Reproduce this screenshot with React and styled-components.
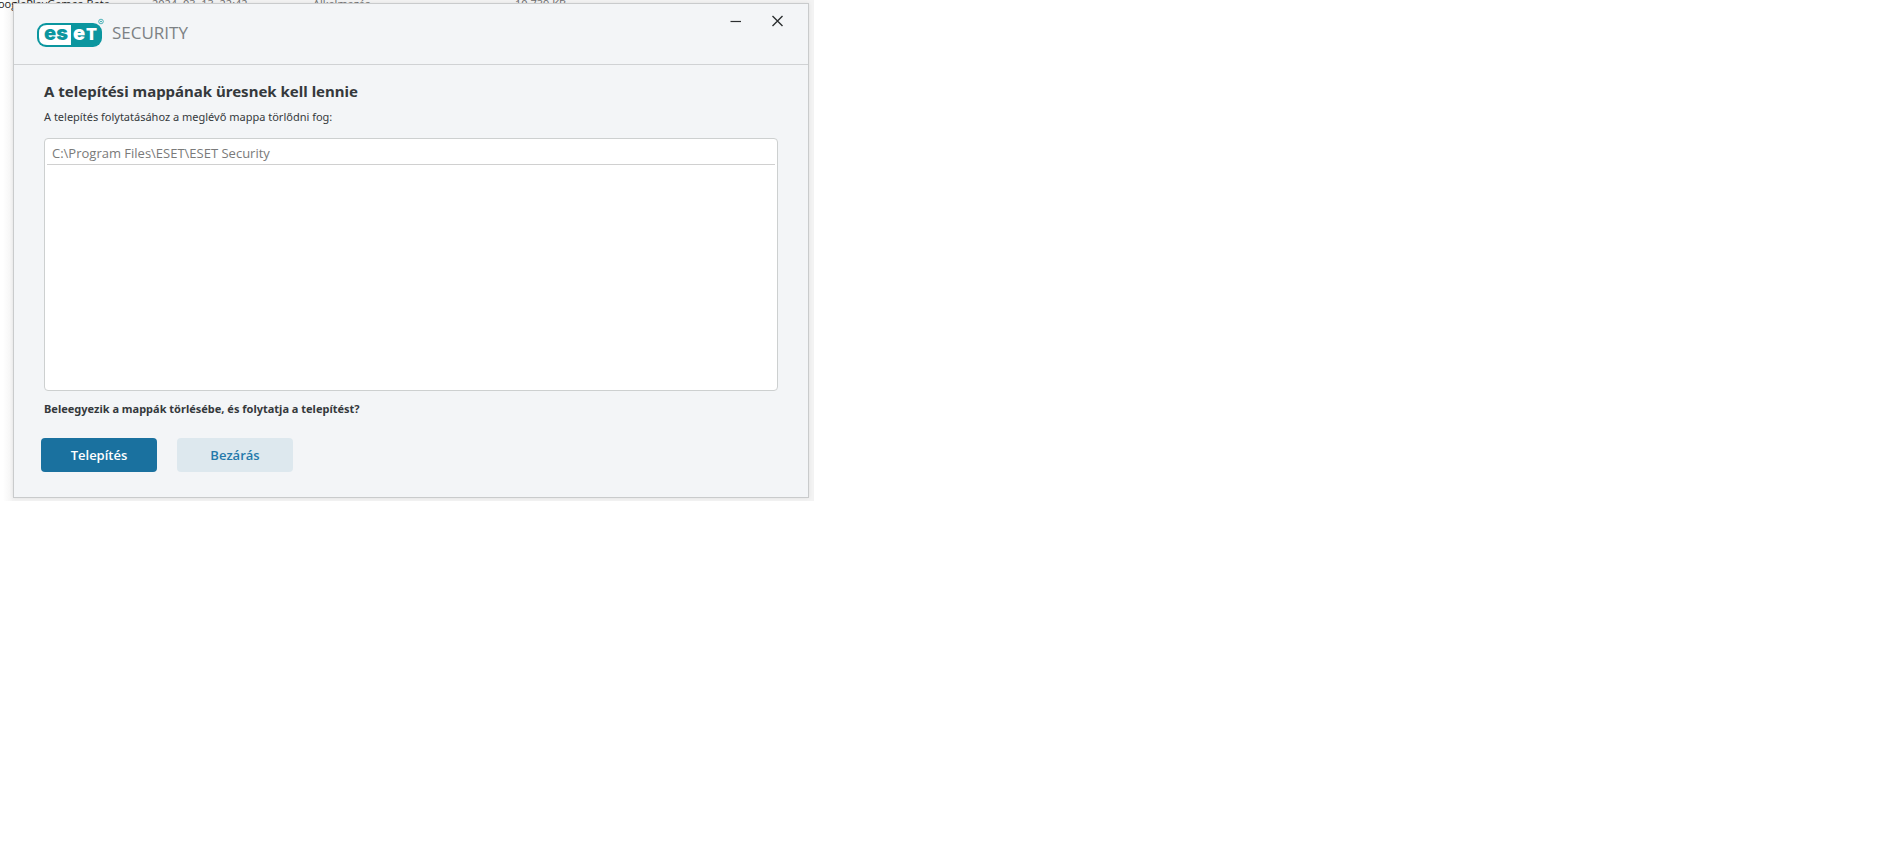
import React from "react"
import styled, { createGlobalStyle } from "styled-components"

const GlobalStyle = createGlobalStyle`
    * {
        box-sizing: border-box;
    }

    body {
        margin: 0;
        background: #ffffff;
        font-family: "Noto Sans", "Open Sans", sans-serif;
        color: #35393c;
    }
`

const Desktop = styled.div`
    max-width: 814px;
    overflow: hidden;
    padding: 0 5px 3px 0;
    background: linear-gradient(to right, #ffffff 3px, #f3f3f3 13px);
`

// the explorer row that the installer window covers
const FileRow = styled.div`
    display: grid;
    grid-template-columns: 152px 161px 202px 1fr;
    align-items: end;
    height: 3px;
    font-family: "Open Sans", sans-serif;
    font-size: 11px;
    line-height: 7px;
    white-space: nowrap;
    color: #6d6d6d;
`

const FileName = styled.span`
    color: #1b1b1b;
    justify-self: start;
    margin-left: -10px;
`

const Window = styled.main`
    position: relative;
    margin-left: 13px;
    background: #f3f5f7;
    border: 1px solid #c9cbcc;
    box-shadow: 0 0 4px rgba(0, 0, 0, 0.08);
`

const Header = styled.header`
    display: flex;
    justify-content: space-between;
    height: 61px;
    padding: 0 16px 0 22px;
    border-bottom: 1px solid #d0d2d4;
`

const Brand = styled.div`
    display: flex;
    align-items: center;
    gap: 7px;
    padding-bottom: 2px;
    font-family: "Open Sans", sans-serif;
    font-size: 17px;
    line-height: 26px;
    color: #7c8184;
`

const WindowButtons = styled.div`
    display: flex;
    gap: 14px;
    padding-top: 3px;
`

const IconButton = styled.button`
    display: flex;
    align-items: center;
    justify-content: center;
    width: 28px;
    height: 28px;
    padding: 0;
    border: 0;
    background: none;
    color: #2b2e30;
`

const Content = styled.section`
    padding: 15px 30px 25px;
`

const Title = styled.h1`
    margin: 0;
    font-size: 15px;
    line-height: 22px;
    font-weight: 700;
`

const Text = styled.p`
    margin: 0;
    padding-top: ${(props) => props.$space}px;
    font-size: 11px;
    line-height: 18px;
    font-weight: ${(props) => (props.$bold ? 700 : 400)};
`

const FolderList = styled.ul`
    height: 253px;
    margin: 12px 0 0;
    padding: 0 2px;
    list-style: none;
    background: #ffffff;
    border: 1px solid #cdd0d0;
    border-radius: 4px;
`

const Folder = styled.li`
    height: 26px;
    padding: 0 5px;
    font-family: "Open Sans", sans-serif;
    font-size: 13px;
    line-height: 29px;
    color: #7a7a7a;
    border-bottom: 1px solid #d0d0d0;
`

const Actions = styled.div`
    display: flex;
    gap: 20px;
    margin: 20px 0 0 -3px;
`

const Button = styled.button`
    width: 116px;
    height: 34px;
    padding: 0;
    border: 0;
    border-radius: 4px;
    font-family: "Open Sans", sans-serif;
    font-size: 13px;
    font-weight: 600;
    color: ${(props) => (props.$primary ? "#ffffff" : "#2479ab")};
    background: ${(props) => (props.$primary ? "#1a719f" : "#dde8ee")};
`

const EsetLogo = () => (
    <svg width="69" height="30" viewBox="0 0 69 30" role="img" aria-label="ESET">
        <rect x="1" y="5" width="65" height="24" rx="9" fill="#0b969f" />
        <path d="M35 7H11Q3 7 3 15V19Q3 27 11 27H35Z" fill="#ffffff" />
        <g fontFamily="Inter, sans-serif" fontSize="20" fontWeight="900">
            <text x="8" y="22" fill="#0b969f">es</text>
            <text x="37" y="22" fill="#ffffff">e</text>
            <text x="50" y="22" fontSize="16" fill="#ffffff">T</text>
        </g>
        <circle cx="65" cy="3.5" r="2.3" fill="none" stroke="#0b969f" strokeWidth="0.7" />
        <circle cx="65" cy="3.5" r="0.8" fill="#0b969f" />
    </svg>
)

const App = () => {
    return (
        <>
            <GlobalStyle />
            <Desktop>
                <FileRow>
                    <FileName>GooglePlayGames-Beta</FileName>
                    <span>2024. 03. 13. 22:42</span>
                    <span>Alkalmazás</span>
                    <span>10 739 KB</span>
                </FileRow>
                <Window>
                    <Header>
                        <Brand>
                            <EsetLogo />
                            <span>SECURITY</span>
                        </Brand>
                        <WindowButtons>
                            <IconButton aria-label="Kis méret">
                                <svg width="12" height="12" viewBox="0 0 12 12">
                                    <path d="M0.5 6.5H11" stroke="currentColor" strokeWidth="1.2" />
                                </svg>
                            </IconButton>
                            <IconButton aria-label="Bezárás">
                                <svg width="12" height="12" viewBox="0 0 12 12">
                                    <path d="M0.5 1L10.5 11M10.5 1L0.5 11" stroke="currentColor" strokeWidth="1.4" />
                                </svg>
                            </IconButton>
                        </WindowButtons>
                    </Header>
                    <Content>
                        <Title>A telepítési mappának üresnek kell lennie</Title>
                        <Text $space={6}>A telepítés folytatásához a meglévő mappa törlődni fog:</Text>
                        <FolderList>
                            <Folder>C:\Program Files\ESET\ESET Security</Folder>
                        </FolderList>
                        <Text $space={9} $bold>Beleegyezik a mappák törlésébe, és folytatja a telepítést?</Text>
                        <Actions>
                            <Button $primary>Telepítés</Button>
                            <Button>Bezárás</Button>
                        </Actions>
                    </Content>
                </Window>
            </Desktop>
        </>
    )
}

export default App
